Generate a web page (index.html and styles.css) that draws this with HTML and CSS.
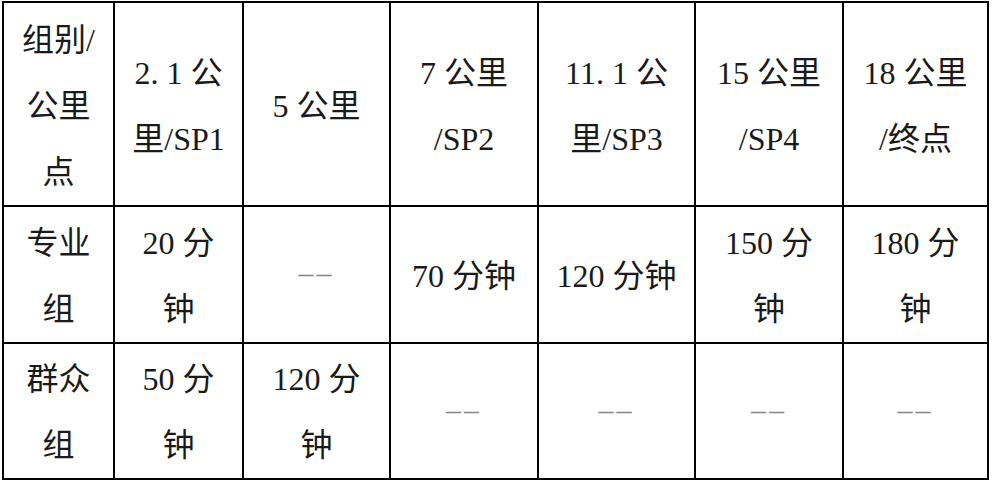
FILE: index.html
```html
<!DOCTYPE html>
<html lang="zh-CN">
<head>
<meta charset="utf-8">
<title>关门时间</title>
<link rel="stylesheet" href="styles.css">
</head>
<body>
<table class="cutoff">
  <colgroup>
    <col class="c1"><col class="c2"><col class="c3"><col class="c4"><col class="c5"><col class="c6"><col class="c7">
  </colgroup>
  <tr class="r1">
    <td>组别/<br>公里<br>点</td>
    <td>2. 1 公<br>里/SP1</td>
    <td>5 公里</td>
    <td>7 公里<br>/SP2</td>
    <td>11. 1 公<br>里/SP3</td>
    <td>15 公里<br>/SP4</td>
    <td>18 公里<br>/终点</td>
  </tr>
  <tr class="r2">
    <td>专业<br>组</td>
    <td>20 分<br>钟</td>
    <td><span class="dash">––</span></td>
    <td>70 分钟</td>
    <td>120 分钟</td>
    <td>150 分<br>钟</td>
    <td>180 分<br>钟</td>
  </tr>
  <tr class="r3">
    <td>群众<br>组</td>
    <td>50 分<br>钟</td>
    <td>120 分<br>钟</td>
    <td><span class="dash">––</span></td>
    <td><span class="dash">––</span></td>
    <td><span class="dash">––</span></td>
    <td><span class="dash">––</span></td>
  </tr>
</table>
</body>
</html>
```

FILE: styles.css
```css
html, body {
  margin: 0;
  padding: 0;
  background: #fff;
}

.cutoff {
  margin: 1px 0 0 2px;
  border-collapse: collapse;
  table-layout: fixed;
  width: 985px;
  font-family: "Liberation Serif", "Noto Sans CJK SC", serif;
  font-size: 32px;
  line-height: 66px;
  color: #1a1a1a;
}

.c1 { width: 111px; }
.c2 { width: 129px; }
.c3 { width: 147px; }
.c4 { width: 148px; }
.c5 { width: 157px; }
.c6 { width: 148px; }
.c7 { width: 145px; }

.cutoff td {
  border: 2px solid #000;
  text-align: center;
  vertical-align: middle;
  padding: 0 2px;
  white-space: nowrap;
}

.r1 { height: 203px; }
.r1 td { padding-top: 4px; }
.r2 { height: 137px; }
.r2 td { padding-top: 2px; }
.r3 { height: 134px; }
.r3 td { padding-top: 2px; }

.dash {
  display: inline-block;
  color: #888;
  font-size: 30px;
  letter-spacing: 3px;
  transform: translateY(-3px);
}
```
